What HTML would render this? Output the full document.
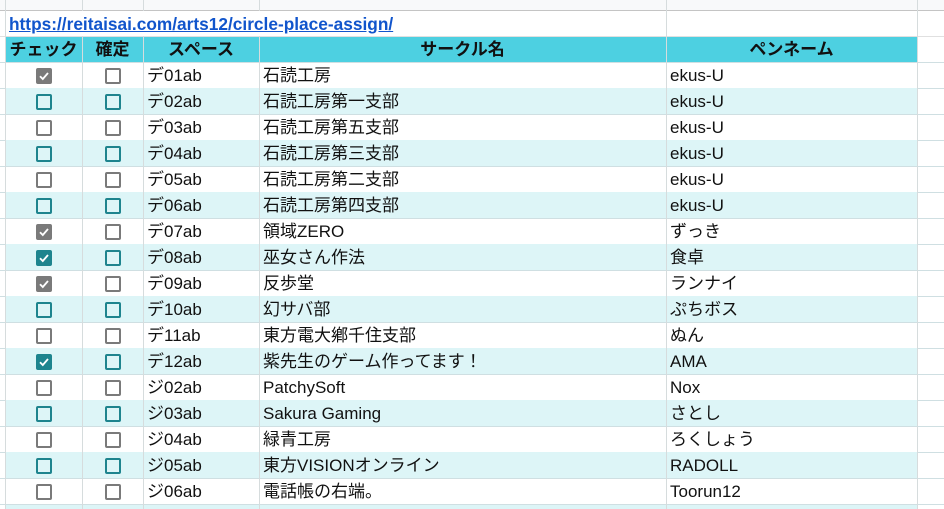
<!DOCTYPE html>
<html><head><meta charset="utf-8"><style>
body{margin:0;width:944px;height:509px;overflow:hidden;background:#fff;font-family:"Liberation Sans","Noto Sans CJK JP",sans-serif;position:relative}
.a{position:absolute}
.hl{position:absolute;left:0;width:944px;height:1px}
.vl{position:absolute;width:1px}
.t{position:absolute;font-size:17px;color:#111;line-height:26px;white-space:nowrap}
.cb{position:absolute;width:12px;height:12px;border:2px solid #7a7a7a;border-radius:2px}
.cb.tl{border-color:#1e848e}
.cb.ck{background:#7a7a7a}
.cb.tl.ck{background:#1e848e}
.cb.ck svg{position:absolute;left:0;top:0}
</style></head><body>
<div class="a" style="left:0;top:0;width:944px;height:10px;background:#f8f9fa"></div>
<div class="a" style="left:5px;top:36px;width:912px;height:26px;background:#4dd0e1"></div>
<div id="rows"></div>
<div class="t" style="left:9px;top:11px;color:#1155cc;font-weight:bold;text-decoration:underline;font-size:17.3px">https://reitaisai.com/arts12/circle-place-assign/</div>
<div class="t" style="left:5px;top:37px;width:77px;text-align:center;font-weight:bold">チェック</div>
<div class="t" style="left:82px;top:37px;width:61px;text-align:center;font-weight:bold">確定</div>
<div class="t" style="left:143px;top:37px;width:116px;text-align:center;font-weight:bold">スペース</div>
<div class="t" style="left:259px;top:37px;width:407px;text-align:center;font-weight:bold">サークル名</div>
<div class="t" style="left:666px;top:37px;width:251px;text-align:center;font-weight:bold">ペンネーム</div>
<script>
var d=[["デ01ab","石読工房","ekus-U",1],["デ02ab","石読工房第一支部","ekus-U",0],["デ03ab","石読工房第五支部","ekus-U",0],["デ04ab","石読工房第三支部","ekus-U",0],["デ05ab","石読工房第二支部","ekus-U",0],["デ06ab","石読工房第四支部","ekus-U",0],["デ07ab","領域ZERO","ずっき",1],["デ08ab","巫女さん作法","食卓",1],["デ09ab","反歩堂","ランナイ",1],["デ10ab","幻サバ部","ぷちボス",0],["デ11ab","東方電大鄕千住支部","ぬん",0],["デ12ab","紫先生のゲーム作ってます！","AMA",1],["ジ02ab","PatchySoft","Nox",0],["ジ03ab","Sakura Gaming","さとし",0],["ジ04ab","緑青工房","ろくしょう",0],["ジ05ab","東方VISIONオンライン","RADOLL",0],["ジ06ab","電話帳の右端。","Toorun12",0]];
var h='';
var chk='<svg width="12" height="12" viewBox="0 0 12 12"><path d="M2 6.2L4.8 9L10 3" stroke="#fff" stroke-width="1.8" fill="none"/></svg>';
for(var i=0;i<d.length;i++){var y=62+i*26,tl=i%2==1;
if(tl)h+='<div class="a" style="left:5px;top:'+y+'px;width:912px;height:26px;background:#ddf5f7"></div>';
var c=tl?' tl':'';
h+='<div class="cb'+c+(d[i][3]?' ck':'')+'" style="left:36px;top:'+(y+6)+'px">'+(d[i][3]?chk:'')+'</div>';
h+='<div class="cb'+c+'" style="left:105px;top:'+(y+6)+'px"></div>';
h+='<div class="t" style="left:147px;top:'+(y+1)+'px">'+d[i][0]+'</div>';
h+='<div class="t" style="left:263px;top:'+(y+1)+'px">'+d[i][1]+'</div>';
h+='<div class="t" style="left:670px;top:'+(y+1)+'px">'+d[i][2]+'</div>';
h+='<div class="hl" style="top:'+(y+26)+'px;background:#cfdfe2"></div>';}
h+='<div class="a" style="left:5px;top:505px;width:912px;height:4px;background:#ddf5f7"></div>';
h+='<div class="hl" style="top:10px;background:#c4c4c4"></div><div class="hl" style="top:36px;background:#e0e0e0"></div><div class="hl" style="top:62px;background:#d0dfe2"></div>';
var xs=[5,82,143,259,666,917];
for(var j=0;j<xs.length;j++)h+='<div class="vl" style="left:'+xs[j]+'px;top:0;height:509px;background:#d6dcdd"></div>';
h+='<div class="vl" style="left:82px;top:11px;height:25px;background:#fff"></div><div class="vl" style="left:143px;top:11px;height:25px;background:#fff"></div><div class="vl" style="left:259px;top:11px;height:25px;background:#fff"></div>';
document.getElementById('rows').innerHTML=h;
</script>
</body></html>
